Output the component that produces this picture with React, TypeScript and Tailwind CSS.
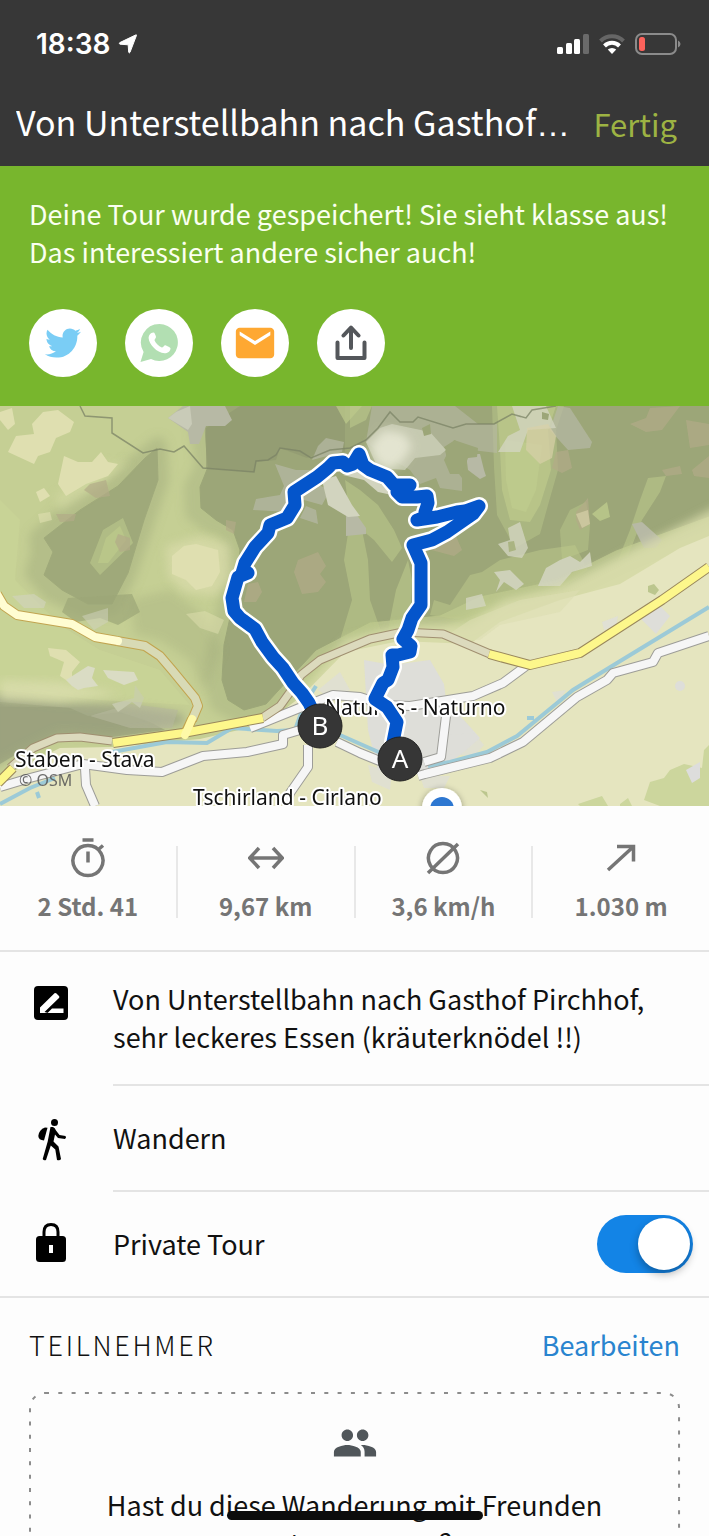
import { useState } from 'react';
import type { ReactNode } from 'react';
import { FaTwitter } from 'react-icons/fa';
import { MdEmail, MdPeople } from 'react-icons/md';

const tour = {
  title: 'Von Unterstellbahn nach Gasthof',
  description: 'Von Unterstellbahn nach Gasthof Pirchhof, sehr leckeres Essen (kräuterknödel !!)',
  sport: 'Wandern',
};

// Route from B (top of the cable car) round to A
const routePath =
  'M316 718L309 703L302 693L293 683L283 668L273 657L262 642L255 629L240 618L234 611L232 598L238 577L248 573L242 573L245 563L255 547L268 533L270 525L287 518L295 505L294 492L317 477L328 468L333 463L343 462L347 466L353 464L359 454L363 465L370 470L387 477L394 485L410 485L397 492L402 497L417 497L427 496L428 503L425 512L425 517L417 520L437 517L457 512L465 511L479 506L473 514L460 523L447 532L432 540L413 545L421 563L421 605L412 618L408 630L403 639L411 646L410 652L398 655L392 655L393 667L388 680L383 683L375 699L387 707L397 722L393 742';

// Every road is drawn twice: a wide casing, then the fill on top
const whiteRoads = [
  'M0 787L30 778L83 764L127 770L162 772L203 756L247 752L283 744L283 735L300 730',
  'M250 728L302 707L333 695L360 697L385 705L410 706L473 696L503 683L526 666',
  'M337 742L360 753L392 766',
  'M418 776L425 774L490 758L523 742L577 697L607 680L613 673L653 662L658 653L709 636',
  'M308 745L308 767L290 793L286 806',
  'M85 768L86 785L95 806',
  'M446 716L441 757L424 762',
];
const tunnels = [
  'M112 741L80 737L57 738L33 748L10 768',
  'M262 718L280 706L293 688L301 675L320 660L370 639L403 632L443 634L490 654',
];
const yellowRoads = [
  'M113 743L183 733L263 718',
  'M489 654L530 665L580 653L662 600L709 567',
  'M-2 783L13 768',
];

function TourMap() {
  return (
    <svg
      viewBox="0 406 709 400"
      preserveAspectRatio="xMidYMid slice"
      className="block h-100 w-full"
      role="img"
      aria-label="Karte der Tour"
    >
      <defs>
        <filter id="soft" x="-20%" y="-20%" width="140%" height="140%">
          <feGaussianBlur stdDeviation="5" />
        </filter>
        <filter id="shadow" x="-30%" y="-30%" width="160%" height="160%">
          <feDropShadow dx="0" dy="1" stdDeviation="3" floodOpacity="0.35" />
        </filter>
      </defs>
      <rect x="0" y="406" width="709" height="400" fill="#c5cf94" />

      {/* Forest */}
      <g fill="#9ca678" stroke="#9ca678" strokeLinejoin="round">
        <g filter="url(#soft)">
          <path opacity="0.35" strokeWidth="16" d="M195 390L200 443L203 467L192 487L193 513L209 525L226 530L232 550L229 590L216 645L212 680L218 704L242 716L268 708L290 680L320 650L375 625L440 620L480 600L560 585L620 555L730 510L730 390Z" />
          <path opacity="0.4" strokeWidth="18" d="M158 446L143 458L110 486L75 505L38 538L40 552L34 573L50 592L80 606L112 606L128 573L146 520L160 480Z" />
        </g>
        <path strokeWidth="1" d="M203 390L206 443L208 467L200 487L201 508L216 520L233 530L240 550L236 590L224 645L222 680L228 700L244 710L266 704L288 680L316 650L370 622L440 615L480 596L556 580L616 550L720 512L720 390Z" />
        <path strokeWidth="1" opacity="0.85" d="M157 448L145 458L118 486L80 510L44 538L53 552L44 575L62 590L88 604L112 604L128 573L144 520L158 480Z" />
        <path stroke="none" opacity="0.7" d="M68 598L132 594L140 612L118 625L100 618L76 622L62 612Z" />
        <path stroke="none" opacity="0.3" filter="url(#soft)" d="M130 600L170 590L200 612L222 650L204 690L190 660L160 640L135 634Z" />
      </g>
      <path fill="#8f976f" opacity="0.6" d="M206 428L240 406L345 406L345 452L325 451L307 458L280 448L276 460L256 462L254 472L206 468Z" />
      <path fill="#a3a986" filter="url(#soft)" d="M-10 694L60 702L120 704L182 714L185 724L112 736L60 732L20 752L-10 768Z" />
      <path fill="#98a07b" opacity="0.7" d="M0 702L70 708L88 716L120 712L150 722L165 730L112 737L57 736L20 752L0 764Z" />
      <path fill="#b6b89c" opacity="0.6" d="M90 716L130 704L178 710L172 728L130 728Z" />
      <path fill="#c5c9ac" d="M135 685L144 698L140 708L132 702L118 712L112 704L134 698Z" />

      {/* Clearings and light slopes */}
      <g fill="#bdca8c">
        <path opacity="0.6" d="M123 518L133 543L100 575L90 563L103 530Z" />
        <path opacity="0.7" d="M120 526L126 540L108 563L98 563L106 538Z" />
        <path opacity="0.45" d="M492 406L564 406L556 430L558 470L548 505L540 534L515 548L497 515L494 467Z" />
        <path opacity="0.7" d="M497 406L556 406L548 430L551 470L540 505L530 522L510 520L502 490L500 450Z" />
        <path d="M505 440L542 445L536 490L526 512L512 508L506 480Z" />
        <path opacity="0.55" d="M345 480L360 490L378 505L394 530L402 548L392 562L374 540L362 530L368 560L370 600L384 640L340 640L352 600L344 560L350 520Z" />
        <path opacity="0.6" d="M386 640L396 590L408 560L412 580L410 640Z" />
        <path opacity="0.5" d="M430 615L434 600L450 605L470 575L482 572L500 560L540 550L575 545L588 570L560 590L500 605L460 620Z" />
        <path opacity="0.55" d="M648 478L666 476L660 492L642 520L628 556L618 560L630 530L640 500Z" />
        <path opacity="0.45" d="M560 530L570 510L586 502L590 525L588 550L562 560Z" />
        <path opacity="0.8" d="M607 502L610 517L600 521L592 514Z" />
        <path opacity="0.7" d="M336 406L362 406L346 424Z" />
        <path opacity="0.6" d="M350 406L372 406L366 420L350 428Z" />
      </g>
      <path fill="#cfd99c" opacity="0.35" d="M0 500L20 520L15 580L60 625L100 650L160 670L190 705L100 700L0 690Z" />
      <path fill="#dddfb0" filter="url(#soft)" opacity="0.7" d="M0 680L60 682L120 694L60 702L0 700Z" />
      <path fill="#d6dca6" filter="url(#soft)" opacity="0.6" d="M55 496L105 464L130 462L100 486L60 512Z" />

      {/* Meadows */}
      <path fill="#dfdfb0" opacity="0.6" filter="url(#soft)" d="M166 546L200 536L230 544L232 580L214 596L184 592L168 576Z" />
      <g fill="#dfdfb0">
        <path d="M43 412L58 410L74 422L70 432L56 438L50 452L38 456L34 464L8 452L16 436L34 434L32 424Z" />
        <path d="M64 456L78 462L92 462L101 452L108 462L118 464L108 476L86 484L66 496L58 484Z" />
        <path d="M36 492L44 488L50 496L40 502Z" />
        <path d="M172 556L184 546L196 544L218 550L220 572L212 586L196 590L186 580L172 574Z" />
        <path d="M0 412L12 408L15 424L8 430L0 420Z" />
        <path d="M48 648L66 650L80 662L72 672L72 684L60 676L64 662L50 656Z" />
        <path opacity="0.5" d="M186 614L205 611L224 620L218 634L200 628Z" />
        <path opacity="0.6" d="M38 514L50 512L52 520L40 523Z" />
      </g>
      <g fill="#b3ab88" opacity="0.7">
        <path d="M90 484L106 480L110 496L96 498L84 490Z" />
        <path d="M56 514L76 514L74 521L60 522Z" />
        <path d="M118 534L130 538L130 550L120 552L115 542Z" />
        <path d="M298 560L318 552L326 566L320 574L326 582L318 592L302 594L294 572Z" />
        <path d="M248 584L258 582L262 592L256 602L244 602Z" />
        <path d="M226 520L236 522L234 534L226 530Z" />
        <path d="M650 408L680 406L662 430L646 432L630 424L646 418Z" />
        <path d="M686 420L709 424L709 445L690 448L688 434Z" />
        <path d="M662 470L680 466L682 474L666 476Z" />
        <path d="M692 470L709 456L709 478L694 476Z" />
        <path d="M556 452L568 450L572 468L562 473L552 468Z" />
        <path d="M576 512L588 498L590 524L580 530L576 520Z" />
        <path d="M424 548L455 534L462 550L454 556Z" />
      </g>

      {/* Rock and ice */}
      <g fill="#b7b9a5">
        <path d="M183 406L225 406L232 420L225 426L206 426L199 444L190 444L188 432L168 418Z" />
        <path fill="#c9cbb8" d="M176 412L190 406L192 424L188 430L168 418Z" />
        <path opacity="0.7" d="M326 438L344 442L342 452L312 460L318 446Z" />
        <path opacity="0.7" d="M275 464L296 470L315 470L312 482L330 490L322 505L304 500L290 512L253 510L256 499L280 495L284 486Z" />
        <path opacity="0.7" d="M306 506L316 510L318 524L300 518Z" />
        <path opacity="0.6" d="M372 406L455 406L478 424L497 424L497 453L463 449L455 440L444 447L447 458L462 478L462 491L440 488L436 478L420 484L410 470L376 450L366 442Z" />
        <path opacity="0.7" d="M558 406L570 408L592 442L590 448L568 450L550 430Z" />
        <path d="M466 454L480 454L484 470L486 476L480 479L468 470Z" />
        <path d="M632 524L642 522L662 540L656 548L644 548Z" />
        <path d="M346 512L352 508L366 528L366 534L346 536Z" />
      </g>
      <g fill="#d2d4bf">
        <path opacity="0.7" d="M366 442L380 428L392 424L430 432L446 450L440 455L415 458L405 470L378 468Z" />
        <path fill="#e3e4d0" filter="url(#soft)" d="M370 446L384 430L404 434L412 446L402 462L388 470L376 462Z" />
        <path d="M322 480L336 476L352 505L360 516L348 517L328 505Z" />
        <path d="M343 475L358 470L382 485L392 495L378 492L364 480Z" />
        <path opacity="0.8" d="M512 406L546 406L556 428L528 430L520 452L498 452L508 436L520 430Z" />
        <path opacity="0.8" d="M508 528L520 522L528 548L522 558L508 556L498 544L510 540Z" />
        <path opacity="0.9" d="M560 560L570 556L580 562L590 552L592 566L572 572L560 586L538 586L546 568Z" />
        <path opacity="0.9" d="M494 572L510 570L524 584L516 590L504 582L496 592L500 580Z" />
        <path opacity="0.8" d="M466 598L482 594L486 606L466 610Z" />
        <path fill="#dadcc4" d="M66 680L88 666L95 668L92 678L98 686L84 688L78 690L72 686Z" />
        <path fill="#dadcc4" d="M103 670L134 672L138 680L124 685L108 678Z" />
        <path opacity="0.6" d="M12 596L34 594L46 602L44 608L24 608Z" />
        <path opacity="0.5" d="M82 616L108 608L108 622L94 630Z" />
      </g>
      <g fill="#d8d0a8" opacity="0.7">
        <path d="M527 428L548 424L556 436L552 458L540 464L526 450Z" />
        <path d="M576 514L588 510L590 524L582 528Z" />
      </g>
      <path fill="#9ca678" d="M454 440L478 448L477 457L468 458L462 474L450 474L444 460Z" />
      <path fill="#9ca678" d="M422 428L430 424L431 434L424 436Z" />
      <path fill="#9ca678" d="M542 412L549 414L548 420L542 419Z" />
      <path fill="#aab482" d="M508 542L514 541L516 550L509 552Z" />
      <path
        fill="none"
        stroke="#7b8365"
        strokeOpacity="0.75"
        strokeWidth="1.5"
        d="M80 406L85 416L112 418L112 433L143 453L160 449L174 452L184 446L203 468L254 472L256 461L268 460L276 455L280 448L300 451L311 458L330 450L350 448L366 440L378 428L390 412L400 422L413 422L418 417L453 428L466 424L494 424L512 414L526 418L532 410L556 406"
      />

      {/* Valley floor */}
      <path fill="#dbdeae" opacity="0.8" filter="url(#soft)" d="M290 710L345 640L400 626L470 625L504 600L560 586L620 556L720 505L720 600L300 720Z" />
      <path fill="#e5e5bf" d="M0 806L0 778L60 748L112 747L200 739L265 724L302 696L345 652L400 641L470 644L500 622L560 600L620 584L680 548L709 536L709 806Z" />
      <path fill="#dcdeb2" opacity="0.6" d="M440 640L470 620L520 600L580 590L560 612L500 625L480 640Z" />
      <g fill="#dddddc" opacity="0.9">
        <path d="M364 660L392 665L430 660L444 684L446 700L480 738L464 752L440 770L404 776L378 770L368 730Z" />
        <path opacity="0.7" d="M318 690L340 672L350 690L330 698Z" />
        <path opacity="0.7" d="M450 735L474 733L484 745L474 756L450 754Z" />
        <path d="M640 618L660 606L670 616L656 634Z" />
        <path opacity="0.8" d="M602 622L618 616L616 626L604 630Z" />
        <circle cx="680" cy="686" r="5" />
        <path opacity="0.7" d="M552 692L566 690L558 704Z" />
        <path opacity="0.7" d="M420 776L450 776L444 788L424 788Z" />
        <path opacity="0.7" d="M368 765L392 772L390 790L372 782Z" />
      </g>
      <path fill="#ccd69d" d="M709 745L704 750L702 768L684 764L670 770L664 778L650 782L644 800L660 806L709 806Z" />
      <path fill="#dddddc" d="M686 770L700 762L700 778L692 783Z" />
      <path fill="#ccd69d" d="M578 804L602 796L608 806L580 806ZM620 804L628 798L632 806L620 806Z" />
      <path fill="#bcc68e" d="M648 586L654 584L659 590L655 595L648 592ZM480 790L487 792L488 798Z" />

      {/* Adige */}
      <g fill="none" stroke="#9ccad7" strokeWidth="4">
        <path d="M0 804L30 788L55 778" />
        <path d="M112 752L167 742L207 743L232 728L277 731L295 730L304 705L316 686" />
        <path d="M340 735L392 758" />
        <path d="M428 766L450 762L487 752L517 736L573 690L617 663L709 607" />
        <path d="M527 718L534 718M531 738L533 730M37 792L39 798" />
      </g>

      {/* Roads */}
      <g fill="none" strokeLinejoin="round">
        {whiteRoads.map((d) => (
          <path key={d} d={d} stroke="#9d9d98" strokeWidth="10" />
        ))}
        {whiteRoads.map((d) => (
          <path key={d} d={d} stroke="#f6f6f6" strokeWidth="8" />
        ))}
        {tunnels.map((d) => (
          <path key={d} d={d} stroke="#a08f70" strokeWidth="9" />
        ))}
        {tunnels.map((d) => (
          <path key={d} d={d} stroke="#dcdabd" strokeWidth="7" />
        ))}
        <path d="M117 641L145 646L160 656L172 670L195 698L198 706L192 720" stroke="#c2a44f" strokeWidth="10" />
        <path d="M117 641L145 646L160 656L172 670L195 698L198 706L192 720" stroke="#d8dab5" strokeWidth="8" />
        <path d="M-3 594L4 606L17 615L72 624L95 637L117 641" stroke="#c2a44f" strokeWidth="10" />
        <path d="M-3 594L4 606L17 615L72 624L95 637L118 641" stroke="#fffdd2" strokeWidth="8" strokeLinecap="round" />
        {yellowRoads.map((d) => (
          <path key={d} d={d} stroke="#99875c" strokeWidth="10" />
        ))}
        <path d="M192 719L185 734" stroke="#c2a44f" strokeWidth="10" />
        {yellowRoads.map((d) => (
          <path key={d} d={d} stroke="#fdf78b" strokeWidth="8" />
        ))}
        <path d="M192 719L185 735" stroke="#fef9a8" strokeWidth="8" strokeLinecap="round" />
      </g>

      {/* Place names */}
      <text x="19" y="786" fontSize="16" fill="#555" fillOpacity="0.85" fontFamily="'Noto Sans', sans-serif">
        © OSM
      </text>
      <g
        fill="#111"
        stroke="#fff"
        strokeWidth="4"
        strokeLinejoin="round"
        paintOrder="stroke"
        fontSize="21"
        fontFamily="'Noto Sans', sans-serif"
      >
        <text x="325" y="715">Naturns - Naturno</text>
        <text x="15" y="767">Staben - Stava</text>
        <text x="193" y="805">Tschirland - Cirlano</text>
      </g>

      <g fill="none" strokeLinejoin="round" strokeLinecap="round">
        <path d={routePath} stroke="#fff" strokeWidth="18" />
        <path d={routePath} stroke="#0455cb" strokeWidth="13" />
      </g>
      <g filter="url(#shadow)">
        <circle cx="442" cy="808" r="20" fill="#fff" />
      </g>
      <circle cx="442" cy="809" r="12" fill="#2d77d1" />
      <g fontSize="26" textAnchor="middle" fontFamily="'Noto Sans', sans-serif">
        <circle cx="320" cy="726" r="22" fill="#363636" stroke="#222" />
        <text x="320" y="735" fill="#fff">B</text>
        <circle cx="400" cy="759" r="22" fill="#363636" stroke="#222" />
        <text x="400" y="768" fill="#fff">A</text>
      </g>
    </svg>
  );
}

function StatusBar() {
  return (
    <div className="flex h-22 items-center justify-between pr-7 pl-9">
      <div className="flex items-center gap-2 font-['Inter',sans-serif] text-[28px] font-semibold">
        <span>18:38</span>
        <svg viewBox="0 0 20 20" className="size-5" fill="currentColor" stroke="currentColor" strokeLinejoin="round">
          <path d="M18.500 1.300L12 18.300Q11.300 19.500 10.700 18.300L10.200 10.800L2 10.200Q0.600 9.600 1.800 8.600L17.600 1Q18.800 0.600 18.500 1.300Z" />
        </svg>
      </div>
      <div className="flex items-center gap-2.5">
        <svg viewBox="0 0 32 20" className="h-5 w-8" fill="#fff">
          <rect x="0" y="13" width="6" height="7" rx="1.500" />
          <rect x="9" y="9" width="6" height="11" rx="1.500" />
          <rect x="17" y="5" width="6" height="15" rx="1.500" />
          <rect x="26" y="0" width="6" height="20" rx="1.500" fill="#6a6a6a" />
        </svg>
        <svg viewBox="1 0 26 20" className="h-5 w-[26px]" fill="none" strokeWidth="4">
          <path d="M2.500 7A16.500 16.500 0 0 1 25.500 7" stroke="#666" />
          <path d="M6.500 12A10.500 10.500 0 0 1 21.500 12" stroke="#fff" />
          <path d="M14 20L9.800 15.600A6 6 0 0 1 18.200 15.600Z" fill="#fff" />
        </svg>
        <svg viewBox="0 0 46 22" className="h-[22px] w-[46px]">
          <rect x="1" y="1" width="40" height="20" rx="6" fill="none" stroke="#8b8b8b" strokeWidth="2" />
          <rect x="4" y="4" width="6" height="14" rx="2.500" fill="#fc625b" />
          <path d="M43 7.500Q45.500 8.500 45.500 11T43 14.500Z" fill="#8b8b8b" />
        </svg>
      </div>
    </div>
  );
}

const shareTargets: { label: string; icon: ReactNode }[] = [
  { label: 'Twitter', icon: <FaTwitter className="size-9 text-[#7acdf5]" /> },
  {
    label: 'WhatsApp',
    icon: (
      <svg viewBox="0 0 40 40" className="size-10">
        <path fill="#b2dfb2" d="M20.500 1A18.500 18.500 0 1 1 12 36L1.500 39L4.600 29A18.500 18.500 0 0 1 20.500 1Z" />
        <path
          fill="#fff"
          d="M14.300 9.500C15.600 9.300 16.200 11.500 16.900 13.300C17.500 14.900 15.300 16.300 15.500 17.300C16.700 20.500 19.700 23.300 22.800 24.500C24 24.700 25.300 21.800 26.500 22.200C28.300 22.900 31.300 24.300 31.500 25.300C31.600 28.300 28.500 30.300 25.600 30.300C17.800 29.600 10 21.200 9.600 14.900C9.700 12.200 11.700 9.700 14.300 9.500Z"
        />
      </svg>
    ),
  },
  { label: 'E-Mail', icon: <MdEmail className="size-[46px] text-[#fea832]" /> },
  {
    label: 'Teilen',
    icon: (
      <svg
        viewBox="0 0 36 36"
        className="size-9"
        fill="none"
        stroke="#54575b"
        strokeWidth="4"
        strokeLinecap="round"
        strokeLinejoin="round"
      >
        <path d="M4.500 17.500V33H31.500V17.500M18 23V3M10.500 10.500L18 2.500L25.500 10.500" />
      </svg>
    ),
  },
];

const stats: { label: string; value: string; icon: ReactNode }[] = [
  {
    label: 'Dauer',
    value: '2 Std. 41',
    icon: <path d="M12.500 2H23.500M18 13.500V24.500M29.500 10.500L33 7.500M18 7.500A15 15 0 1 1 17.900 7.500Z" />,
  },
  { label: 'Distanz', value: '9,67 km', icon: <path d="M2 20H34M11 10L1.800 20L11 30M25 10L34.200 20L25 30" /> },
  {
    label: 'Geschwindigkeit',
    value: '3,6 km/h',
    icon: <path d="M18 5.500A14.500 14.500 0 1 1 17.900 5.500ZM3 35L33 6" />,
  },
  { label: 'Bergauf', value: '1.030 m', icon: <path d="M5 32L30 9M14 8.500H30.500V23.500" /> },
];

function Row({ icon, children, last }: { icon: ReactNode; children: ReactNode; last?: boolean }) {
  return (
    <div className={`flex ${last ? 'border-b-2 border-[#e4e4e4]' : ''}`}>
      <div className="w-[113px] shrink-0 pt-8 pl-8">{icon}</div>
      <div
        className={`flex flex-1 items-center justify-between pr-4 ${
          last ? 'min-h-26' : 'min-h-[106px] border-b-2 border-[#e4e4e4] py-7'
        }`}
      >
        {children}
      </div>
    </div>
  );
}

export default function App() {
  const [isPrivate, setIsPrivate] = useState(true);

  return (
    <div
      lang="de"
      className="relative flex h-screen flex-col overflow-hidden bg-[#fdfdfd] font-['Noto_Sans_CJK_SC',sans-serif] text-[27px] leading-[38px] text-[#111]"
    >
      <header className="shrink-0 bg-[#373737] text-white">
        <StatusBar />
        <div className="flex h-[78px] items-start gap-5 pr-8 pl-4">
          <h1 className="flex-1 truncate text-[34px] leading-[68px]">
            {tour.title}
            <span className="font-['Liberation_Sans',sans-serif]">…</span>
          </h1>
          <button type="button" className="text-[31px] leading-[72px] text-[#9db343]">
            Fertig
          </button>
        </div>
      </header>

      <main className="flex-1 overflow-hidden">
        {/* Share banner */}
        <section className="bg-[#78b62d] px-[29px] pt-[29px] pb-[29px] text-[#fafff0]">
          <p>
            Deine Tour wurde gespeichert! Sie sieht klasse aus!
            <br />
            Das interessiert andere sicher auch!
          </p>
          <div className="mt-[38px] flex gap-7">
            {shareTargets.map((target) => (
              <button
                key={target.label}
                type="button"
                aria-label={target.label}
                className="flex size-17 items-center justify-center rounded-full bg-white"
              >
                {target.icon}
              </button>
            ))}
          </div>
        </section>

        <TourMap />

        {/* Stats */}
        <section className="flex border-b-2 border-[#e4e4e4] pt-8 pb-8 text-[#757575]">
          {stats.map((stat) => (
            <div
              key={stat.label}
              className="mt-2 flex flex-1 flex-col items-center border-r-2 border-[#e8e8e8] last:border-r-0"
            >
              <svg
                viewBox="0 0 36 40"
                className="-mt-2 h-10 w-9"
                fill="none"
                stroke="currentColor"
                strokeWidth="3.500"
                role="img"
                aria-label={stat.label}
              >
                {stat.icon}
              </svg>
              <span className="mt-4 text-[24px] leading-6 font-bold">{stat.value}</span>
            </div>
          ))}
        </section>

        {/* Details */}
        <Row
          icon={
            <svg viewBox="0 0 38 38" className="size-[38px]">
              <rect x="2" y="2" width="34" height="34" rx="4" fill="#000" />
              <path fill="#fff" d="M8 29V23.500L22.500 9.200Q23.500 8.500 24.500 9.400L27 12Q27.800 13 27 14L12.500 28L16 29ZM15.500 29L20 24.500H31.500V29Z" />
            </svg>
          }
        >
          <p className="flex-1">{tour.description}</p>
        </Row>
        <Row
          icon={
            <svg viewBox="0 0 38 44" className="h-11 w-[38px]">
              <circle cx="22.500" cy="4.500" r="3.500" />
              <path d="M13 9.500L15.500 9.700L12 22.500Q6.500 22 6.300 18Q7 11.500 13 9.500Z" />
              <path d="M18.500 9H21Q23 9.500 24 12.500L27.500 17L33.500 18Q34.800 19.500 33 21L26 20L23 16.500L21.500 23.500L26.500 28.500L29 41Q28 43 25 42L23.300 31.500L18.800 27.500L14 42Q11.800 43 10.700 41L15.700 23.500Z" />
            </svg>
          }
        >
          {tour.sport}
        </Row>
        <Row
          last
          icon={
            <svg viewBox="0 0 38 44" className="-mt-1 h-11 w-[38px]">
              <path d="M12 18V12Q12 4.500 19 4.500T26 12V18" fill="none" stroke="#000" strokeWidth="3" />
              <rect x="4" y="16" width="30" height="26" rx="3.500" />
              <rect x="17" y="25" width="4" height="8" fill="#fff" />
            </svg>
          }
        >
          <label htmlFor="private">Private Tour</label>
          <span className="relative flex h-[58px] w-24">
            <input
              id="private"
              type="checkbox"
              role="switch"
              checked={isPrivate}
              onChange={(e) => setIsPrivate(e.target.checked)}
              className="peer size-full cursor-pointer appearance-none rounded-full bg-gray-300 checked:bg-[#1384e6]"
            />
            <span className="pointer-events-none absolute top-[3px] left-[3px] size-[52px] rounded-full bg-white shadow-[0_4px_8px_rgba(0,0,0,0.3)] peer-checked:left-[41px]" />
          </span>
        </Row>

        {/* Participants */}
        <section className="px-[29px] pt-7">
          <div className="flex items-center justify-between">
            <h2 className="font-light tracking-widest">TEILNEHMER</h2>
            <button type="button" className="text-[#2984cf]">
              Bearbeiten
            </button>
          </div>
          <div className="relative mt-7 px-12 pt-7 pb-12 text-center">
            <svg className="absolute inset-0 size-full overflow-visible" fill="none">
              <rect
                x="1"
                y="1"
                width="99.700%"
                height="99%"
                rx="15"
                stroke="#8c8c8c"
                strokeWidth="2"
                strokeDasharray="4 9.300"
              />
            </svg>
            <MdPeople className="mx-auto size-[46px] text-[#50565a]" />
            <p className="mt-5">
              Hast du diese Wanderung mit Freunden
              <br />
              unternommen?
            </p>
          </div>
        </section>
      </main>

      {/* Home indicator */}
      <div className="absolute bottom-4 left-1/2 h-[9px] w-64 -translate-x-1/2 rounded-full bg-[#0c0c0c]" />
    </div>
  );
}
